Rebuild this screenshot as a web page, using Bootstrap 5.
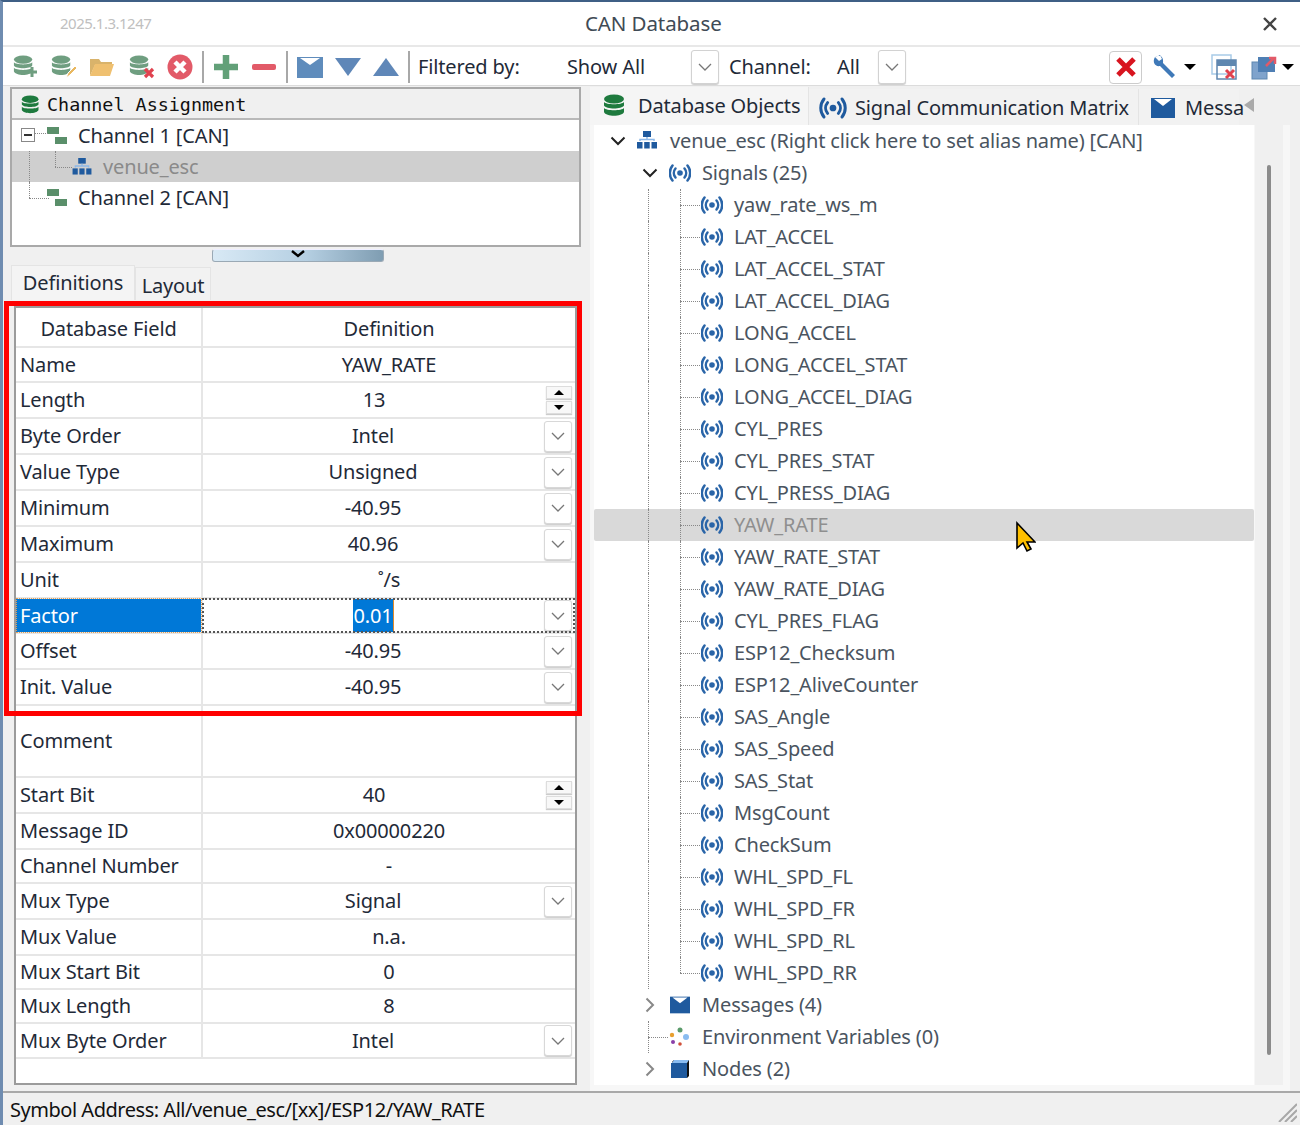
<!DOCTYPE html>
<html lang="en">
<head>
<meta charset="utf-8">
<title>CAN Database</title>
<link href="https://cdn.jsdelivr.net/npm/bootstrap@5.3.0/dist/css/bootstrap.min.css" rel="stylesheet">
<script src="https://cdn.jsdelivr.net/npm/bootstrap@5.3.0/dist/js/bootstrap.bundle.min.js"></script>
<style>
html,body{margin:0;height:1125px;overflow:hidden;background:#fff}
body{font-family:"Noto Sans","Open Sans",sans-serif;font-size:20px;letter-spacing:-.14px;color:#1f2a38;line-height:1}
.app-win{width:1300px;height:1125px;border-top:2px solid #3f5f85;border-left:3px solid #6f8cb0;position:relative;background:#f0f0f0}
.ttl-bar{height:45px;background:#fff;border-bottom:2px solid #e8e8e8;position:relative}
.ttl-ver{margin-left:57px;font-size:15px;color:#c0c0c0;width:530px;letter-spacing:-.5px}
.ttl-txt{font-size:20.5px;color:#404a55;width:600px;text-align:left;margin-left:-5px;letter-spacing:-.1px}
.ttl-x{margin-left:auto;margin-right:22px;width:16px;height:16px}
.tool-bar{height:39px;background:#fff;border-bottom:1px solid #dcdcdc;padding-top:2px}
.tool-left{gap:12px;padding-left:10px}
.tb-ic{width:26px;height:26px;flex:none}
.tb-db4{margin-left:2px}
.tb-sep{width:2px;height:32px;background:#a8a8a8;flex:none;margin:0 -3px}
.fl-lab{margin-left:11px;width:149px}
.sa-val{width:124px}
.ch-lab{margin-left:10px;width:108px}
.ch-val{width:41px}
.dd-box{width:28px;height:34px;border:1px solid #d2d2d2;border-radius:3px;background:#fff;box-shadow:0 1px 1px #ccc;display:flex;align-items:center;justify-content:center;flex:none}
.dd-box svg{width:14px;height:8px}
.x-box{width:33px;height:33px;border:1px solid #ccc;border-radius:4px;display:flex;align-items:center;justify-content:center;margin-left:203px;flex:none}
.caret-d{width:0;height:0;border-left:6px solid transparent;border-right:6px solid transparent;border-top:6px solid #000;flex:none}
.ml-w{margin-left:10px}.ml-c{margin-left:6px}.ml-p{margin-left:15px}.ml-q{margin-left:14px}.ml-r{margin-left:5px}
.main-area{height:1005px;padding-top:1px}
.left-col{width:571px;margin-left:7px;flex:none}
.chan-panel{height:160px;border:2px solid #a9a9a9;background:#fff}
.chan-head{height:31px;background:#f0f0f0;border-bottom:2px solid #b9b9b9;font-family:"DejaVu Sans Mono",monospace;font-size:18.4px;letter-spacing:0;color:#111;padding:3px 0 0 9px;gap:6px}
.chan-head svg{flex:none}
.chan-row{height:31px;padding-left:3px}
.chan-sel{background:#cfcfcf;color:#8a8a8a}
.chan-txt{margin-left:11px}
.tg{width:32px;height:100%;position:relative;flex:none}
.tg-n{width:25px}
.tg-v::before,.tg-t::before,.tg-l::before{content:"";position:absolute;left:calc(50% - 2px);top:0;bottom:0;border-left:1px dotted #888}
.tg-l::before{bottom:50%}
.tg-t::after,.tg-l::after{content:"";position:absolute;left:calc(50% - 2px);right:-2px;top:50%;border-top:1px dotted #888}
.tg-n.tg-l::before{left:8px}
.tg-n.tg-l::after{left:8px;right:0}
.chan-ic{width:20px;height:17px;flex:none}
.exp-box{width:14px;height:14px;border:1px solid #888;background:#fff;position:absolute;left:6px;top:8px}
.exp-box::after{content:"";position:absolute;left:2px;right:2px;top:5px;height:2px;background:#333}
.exp-dash{position:absolute;left:20px;right:-1px;top:13px;border-top:1px dotted #888}
.split-hd{width:172px;height:13px;margin:2px 0 3px 202px;border:1px solid #9aa9b5;border-radius:3px;background:linear-gradient(90deg,#d8e9f5,#b5cfe2 55%,#7f9db2);border-top-color:#eef;position:relative;display:flex;justify-content:center}
.split-hd svg{width:14px;height:8px}
.ltabs{height:35px;padding-left:1px}
.ltab{background:#f2f2f2;border:1px solid #e4e4e4;border-bottom:0;display:flex;align-items:center;justify-content:center}
.ltab-on{width:124px;height:35px;background:#f4f4f4}
.ltab-off{width:76px;height:33px;padding-top:4px}
.def-frame{margin:6px 0 0 4px;width:563px;height:779px;border:2px solid #9b9b9b;background:#fff}
.def-tbl{table-layout:fixed;width:559px;margin:0;border-collapse:collapse;--bs-table-bg:transparent;--bs-table-color:#1f2a38}
.def-tbl td,.def-tbl th{padding:0 0 0 4px;border:0;border-bottom:2px solid #e6e6e6;vertical-align:middle;font-weight:400;background:transparent;box-shadow:none}
.def-tbl td+td,.def-tbl th+th{padding:0;border-left:2px solid #e6e6e6;text-align:center}
.def-tbl th{padding-top:4px!important}
.def-tbl th:first-child{padding:0;text-align:center}
.col-a{width:186px}
.r40{height:39px}.r34{height:34px}.r35{height:35px}.r36{height:36px}.r72{height:72px}
.val-w{display:flex;align-items:center;padding-right:3px;height:100%}
.val-t{flex:1;text-align:center;padding-right:1px}
.cb-btn{width:28px;height:31px;border:1px solid #d8d8d8;border-radius:3px;background:#fff;box-shadow:0 1px 1px #ccc;display:flex;align-items:center;justify-content:center;flex:none}
.cb-btn svg{width:14px;height:8px}
.spin-w{width:26px;flex:none;display:flex;flex-direction:column;gap:2px}
.spin-b{height:13px;border:1px solid #ddd;background:#f8f8f8;display:flex;align-items:center;justify-content:center;box-shadow:0 1px 1px #ccc}
.spin-up{width:0;height:0;border-left:5px solid transparent;border-right:5px solid transparent;border-bottom:5px solid #000}
.spin-dn{width:0;height:0;border-left:5px solid transparent;border-right:5px solid transparent;border-top:5px solid #000}
.def-tbl td.fct-l{background:#0078d7;color:#fff;outline:1px dotted #e8a050;outline-offset:-1px}
.def-tbl td.fct-v{outline:2px dotted #555;outline-offset:-2px}
.sel-txt{background:#0078d7;color:#fff;padding:3px 0;box-shadow:1px 0 0 #e08a2a}
.right-col{width:700px;margin-left:9px;flex:none}
.rtabs{height:38px;overflow:hidden}
.rtab{height:38px;display:flex;align-items:center;flex:none;background:#f2f2f2;border-bottom:1px solid #e4e4e4;border-right:1px solid #e4e4e4}
.rtab svg{flex:none}
.rtab-a{width:219px;padding-left:13px;gap:11px;background:#f5f5f5;border-bottom:0}
.rtab-b{width:330px;padding-left:9px;gap:7px;margin-top:2px}
.rtab-c{width:100px;padding-left:11px;gap:9px;margin-top:2px;white-space:nowrap;border:0}
.rtab-arr{width:0;height:0;border-top:7px solid transparent;border-bottom:7px solid transparent;border-right:10px solid #aaa;margin:11px 0 0 5px;flex:none}
.tree-wrap{height:966px;background:#f7f7f7;padding:0 7px 6px 4px}
.tree-box{width:660px;height:960px;background:#fff}
.tree-row{height:32px;padding-left:8px;color:#4a5460;white-space:nowrap}
.tree-sel{background:#d9d9d9;color:#8f8f8f;border-radius:2px}
.tc{width:32px;height:32px;flex:none;display:flex;align-items:center;justify-content:center;position:relative}
.tc svg.chev{width:16px;height:10px}
.tc svg.chev-r{width:10px;height:16px}
.ico-s{width:22px;height:20px;margin-left:3px;margin-right:11px;flex:none}
.ico-b{color:#2a65a8}
.scr-tr{width:28px;height:960px;background:#f0f0f0;margin-left:1px;flex:none;padding:40px 0 0 12px}
.scr-th{width:4px;height:890px;background:#8b8b8b;border-radius:2px}
.stat-bar{height:33px;border-top:2px solid #a9a9a9;background:#f0f0f0;padding:2px 0 0 7px;position:relative;color:#111;letter-spacing:-.47px}
.grip-s{position:absolute;right:3px;bottom:2px;width:20px;height:20px}
.red-box{position:absolute;left:1px;top:299px;width:578px;height:415px;border:5px solid #f00;pointer-events:none}
.cur-ic{position:absolute;left:1009px;top:518px;width:24px;height:34px}
</style>
</head>
<body>
<svg width="0" height="0" class="d-none">
<defs>
<symbol id="i-db" viewBox="0 0 24 24"><ellipse cx="11" cy="5" rx="10" ry="4.5" fill="currentColor"/><path d="M1 8c2 3 18 3 20 0v3.5c-2 4-18 4-20 0zM1 14c2 3 18 3 20 0v4c-2 5-18 5-20 0z" fill="currentColor"/></symbol>
<symbol id="i-sig" viewBox="0 0 22 20"><circle cx="11" cy="10" r="2.800" fill="currentColor"/><g fill="none" stroke="currentColor" stroke-width="2.500" stroke-linecap="round"><path d="M6.500 5.500c-2.200 2.600-2.200 6.400 0 9M15.500 5.500c2.200 2.600 2.200 6.400 0 9"/><path d="M3.500 2.500c-3.600 4.500-3.600 10.500 0 15M18.500 2.500c3.600 4.500 3.600 10.500 0 15"/></g></symbol>
<symbol id="i-msg" viewBox="0 0 26 24"><rect x="1" y="2" width="24" height="20" fill="#1f5a9e"/><path d="M4 3h18l-9 7z" fill="#fff"/></symbol>
<symbol id="i-net" viewBox="0 0 20 18"><rect x="6" y="0" width="8" height="6" fill="#1f5a9e"/><path d="M10 6v3M3 10V8.500h14V10" stroke="#8db8e8" stroke-width="1.500" fill="none"/><rect x="0" y="11" width="5.500" height="6.500" fill="#1f5a9e"/><rect x="7.200" y="11" width="5.500" height="6.500" fill="#1f5a9e"/><rect x="14.500" y="11" width="5.500" height="6.500" fill="#1f5a9e"/></symbol>
<symbol id="i-chan" viewBox="0 0 20 17"><rect x="0" y="0" width="12" height="7" fill="#5a8f6a"/><rect x="8" y="10" width="12" height="7" fill="#5a8f6a"/></symbol>
<symbol id="i-chev" viewBox="0 0 14 8"><path d="M1 1l6 6 6-6" fill="none" stroke="#777" stroke-width="1.300"/></symbol>
<symbol id="i-chevb" viewBox="0 0 16 10"><path d="M1.500 1.500L8 8l6.500-6.500" fill="none" stroke="#222" stroke-width="2"/></symbol>
<symbol id="i-chevr" viewBox="0 0 10 16"><path d="M1.500 1.500L8 8l-6.500 6.500" fill="none" stroke="#888" stroke-width="2"/></symbol>
</defs>
</svg>
<div class="app-win">
  <div class="ttl-bar d-flex align-items-center">
    <div class="ttl-ver">2025.1.3.1247</div>
    <div class="ttl-txt">CAN Database</div>
    <svg class="ttl-x" viewBox="0 0 16 16"><path d="M2 2l12 12M14 2L2 14" stroke="#444" stroke-width="2.400"/></svg>
  </div>
  <div class="tool-bar d-flex align-items-center">
    <div class="d-flex align-items-center tool-left">
      <svg class="tb-ic" viewBox="0 0 26 26" color="#6f9e80"><use href="#i-db" width="22" height="24"/><path d="M19 13v10M14 18h10" stroke="#6f9e80" stroke-width="3"/></svg>
      <svg class="tb-ic" viewBox="0 0 26 26" color="#6f9e80"><use href="#i-db" width="22" height="24"/><path d="M15 24l2-5 7-7 2 2-7 7z" fill="#e9b860" stroke="#fff"/></svg>
      <svg class="tb-ic" viewBox="0 0 26 26"><path d="M1 5h9l2 3h11v3H6L1 22z" fill="#d9b36b"/><path d="M6 10h19l-4 12H1z" fill="#efc070"/></svg>
      <svg class="tb-ic tb-db4" viewBox="0 0 26 26" color="#6f9e80"><use href="#i-db" width="22" height="24"/><path d="M16 15l8 8M24 15l-8 8" stroke="#e0424f" stroke-width="3.200"/></svg>
      <svg class="tb-ic" viewBox="0 0 26 26"><circle cx="13" cy="13" r="12.500" fill="#e25a68"/><path d="M8 8l10 10M18 8L8 18" stroke="#fff" stroke-width="4.500"/></svg>
      <div class="tb-sep"></div>
      <svg class="tb-ic" viewBox="0 0 26 26"><path d="M13 1v24M1 13h24" stroke="#62a078" stroke-width="6.500"/></svg>
      <svg class="tb-ic" viewBox="0 0 26 26"><rect x="1" y="10" width="24" height="6" rx="2" fill="#e25a68"/></svg>
      <div class="tb-sep"></div>
      <svg class="tb-ic" viewBox="0 0 26 24"><rect x="0" y="2" width="26" height="21" fill="#5f8cbc"/><path d="M3 3h20l-10 7z" fill="#fff"/></svg>
      <svg class="tb-ic" viewBox="0 0 26 26"><path d="M0 4h26L13 22z" fill="#5f87b8"/></svg>
      <svg class="tb-ic" viewBox="0 0 26 26"><path d="M0 22h26L13 4z" fill="#5f87b8"/></svg>
      <div class="tb-sep"></div>
    </div>
    <span class="fl-lab">Filtered by:</span>
    <span class="sa-val">Show All</span>
    <div class="dd-box"><svg><use href="#i-chev"/></svg></div>
    <span class="ch-lab">Channel:</span>
    <span class="ch-val">All</span>
    <div class="dd-box"><svg><use href="#i-chev"/></svg></div>
    <div class="x-box"><svg width="22" height="22" viewBox="0 0 22 22"><path d="M3 3l16 16M19 3L3 19" stroke="#d8141f" stroke-width="5"/></svg></div>
    <svg class="tb-ic ml-w" viewBox="0 0 26 26"><path d="M3 3c5-3 9 0 8 6l12 12-3 3L8 12C3 13 0 8 3 3l4 4 3-2-2-4z" fill="#3f79b8"/></svg>
    <div class="caret-d ml-c"></div>
    <svg class="tb-ic ml-p" viewBox="0 0 26 26"><rect x="1" y="1" width="19" height="19" fill="none" stroke="#a9cbe8" stroke-width="1.500"/><rect x="6" y="6" width="19" height="6" fill="#5f87b0"/><rect x="6" y="6" width="19" height="19" fill="#fff" fill-opacity="0" stroke="#5f87b0" stroke-width="1.500"/><path d="M15 16l8 8M23 16l-8 8" stroke="#e0424f" stroke-width="3"/></svg>
    <svg class="tb-ic ml-q" viewBox="0 0 26 26"><rect x="1" y="8" width="15" height="17" fill="#7fa3cc" stroke="#5f87b0"/><rect x="7" y="3" width="17" height="15" fill="#4f7fb4"/><path d="M15 12l8-8M18 4h6v6" stroke="#e25a68" stroke-width="2.500" fill="none"/></svg>
    <div class="caret-d ml-r"></div>
  </div>
  <div class="main-area d-flex">
    <div class="left-col">
      <div class="chan-panel">
        <div class="chan-head d-flex align-items-center">
          <svg width="20" height="20" color="#1e7a3e"><use href="#i-db"/></svg>Channel Assignment
        </div>
        <div class="chan-row d-flex align-items-center">
          <div class="tg"><span class="exp-box"></span><span class="exp-dash"></span></div>
          <svg class="chan-ic"><use href="#i-chan"/></svg><span class="chan-txt">Channel 1 [CAN]</span>
        </div>
        <div class="chan-row chan-sel d-flex align-items-center">
          <div class="tg tg-v"></div><div class="tg tg-n tg-l"></div>
          <svg class="chan-ic"><use href="#i-net"/></svg><span class="chan-txt">venue_esc</span>
        </div>
        <div class="chan-row d-flex align-items-center">
          <div class="tg tg-l"></div>
          <svg class="chan-ic"><use href="#i-chan"/></svg><span class="chan-txt">Channel 2 [CAN]</span>
        </div>
      </div>
      <div class="split-hd"><svg><path d="M1 1l6 5 6-5" fill="none" stroke="#000" stroke-width="2.400"/></svg></div>
      <div class="ltabs d-flex align-items-end">
        <div class="ltab ltab-on">Definitions</div>
        <div class="ltab ltab-off">Layout</div>
      </div>
      <div class="def-frame">
        <table class="table def-tbl">
          <colgroup><col class="col-a"><col></colgroup>
          <tr class="r40"><th>Database Field</th><th>Definition</th></tr>
          <tr class="r35"><td>Name</td><td>YAW_RATE</td></tr>
          <tr class="r36"><td>Length</td><td><div class="val-w"><span class="val-t">13</span><div class="spin-w"><div class="spin-b"><span class="spin-up"></span></div><div class="spin-b"><span class="spin-dn"></span></div></div></div></td></tr>
          <tr class="r36"><td>Byte Order</td><td><div class="val-w"><span class="val-t">Intel</span><div class="cb-btn"><svg><use href="#i-chev"/></svg></div></div></td></tr>
          <tr class="r36"><td>Value Type</td><td><div class="val-w"><span class="val-t">Unsigned</span><div class="cb-btn"><svg><use href="#i-chev"/></svg></div></div></td></tr>
          <tr class="r36"><td>Minimum</td><td><div class="val-w"><span class="val-t">-40.95</span><div class="cb-btn"><svg><use href="#i-chev"/></svg></div></div></td></tr>
          <tr class="r36"><td>Maximum</td><td><div class="val-w"><span class="val-t">40.96</span><div class="cb-btn"><svg><use href="#i-chev"/></svg></div></div></td></tr>
          <tr class="r36"><td>Unit</td><td>˚/s</td></tr>
          <tr class="r35"><td class="fct-l">Factor</td><td class="fct-v"><div class="val-w"><span class="val-t"><span class="sel-txt">0.01</span></span><div class="cb-btn"><svg><use href="#i-chev"/></svg></div></div></td></tr>
          <tr class="r36"><td>Offset</td><td><div class="val-w"><span class="val-t">-40.95</span><div class="cb-btn"><svg><use href="#i-chev"/></svg></div></div></td></tr>
          <tr class="r36"><td>Init. Value</td><td><div class="val-w"><span class="val-t">-40.95</span><div class="cb-btn"><svg><use href="#i-chev"/></svg></div></div></td></tr>
          <tr class="r72"><td>Comment</td><td></td></tr>
          <tr class="r36"><td>Start Bit</td><td><div class="val-w"><span class="val-t">40</span><div class="spin-w"><div class="spin-b"><span class="spin-up"></span></div><div class="spin-b"><span class="spin-dn"></span></div></div></div></td></tr>
          <tr class="r36"><td>Message ID</td><td>0x00000220</td></tr>
          <tr class="r34"><td>Channel Number</td><td>-</td></tr>
          <tr class="r36"><td>Mux Type</td><td><div class="val-w"><span class="val-t">Signal</span><div class="cb-btn"><svg><use href="#i-chev"/></svg></div></div></td></tr>
          <tr class="r36"><td>Mux Value</td><td>n.a.</td></tr>
          <tr class="r34"><td>Mux Start Bit</td><td>0</td></tr>
          <tr class="r34"><td>Mux Length</td><td>8</td></tr>
          <tr class="r35"><td>Mux Byte Order</td><td><div class="val-w"><span class="val-t">Intel</span><div class="cb-btn"><svg><use href="#i-chev"/></svg></div></div></td></tr>
        </table>
      </div>
    </div>
    <div class="right-col">
      <div class="rtabs d-flex">
        <div class="rtab rtab-a"><svg width="24" height="26" color="#1e7a3e"><use href="#i-db"/></svg>Database Objects</div>
        <div class="rtab rtab-b"><svg width="30" height="24" color="#1f5a9e"><use href="#i-sig"/></svg>Signal Communication Matrix</div>
        <div class="rtab rtab-c"><svg width="26" height="24"><use href="#i-msg"/></svg>Messa</div>
        <div class="rtab-arr"></div>
      </div>
      <div class="tree-wrap d-flex">
        <div class="tree-box">
          <div class="tree-row d-flex align-items-center"><div class="tc"><svg class="chev"><use href="#i-chevb"/></svg></div><svg class="ico-s"><use href="#i-net" width="20" height="18"/></svg>venue_esc (Right click here to set alias name) [CAN]</div>
          <div class="tree-row d-flex align-items-center"><div class="tc"></div><div class="tc"><svg class="chev"><use href="#i-chevb"/></svg></div><svg class="ico-s ico-b"><use href="#i-sig"/></svg>Signals (25)</div>
          <div class="tree-row d-flex align-items-center"><div class="tc"></div><div class="tc tg-v"></div><div class="tc tg-t"></div><svg class="ico-s ico-b"><use href="#i-sig"/></svg>yaw_rate_ws_m</div>
          <div class="tree-row d-flex align-items-center"><div class="tc"></div><div class="tc tg-v"></div><div class="tc tg-t"></div><svg class="ico-s ico-b"><use href="#i-sig"/></svg>LAT_ACCEL</div>
          <div class="tree-row d-flex align-items-center"><div class="tc"></div><div class="tc tg-v"></div><div class="tc tg-t"></div><svg class="ico-s ico-b"><use href="#i-sig"/></svg>LAT_ACCEL_STAT</div>
          <div class="tree-row d-flex align-items-center"><div class="tc"></div><div class="tc tg-v"></div><div class="tc tg-t"></div><svg class="ico-s ico-b"><use href="#i-sig"/></svg>LAT_ACCEL_DIAG</div>
          <div class="tree-row d-flex align-items-center"><div class="tc"></div><div class="tc tg-v"></div><div class="tc tg-t"></div><svg class="ico-s ico-b"><use href="#i-sig"/></svg>LONG_ACCEL</div>
          <div class="tree-row d-flex align-items-center"><div class="tc"></div><div class="tc tg-v"></div><div class="tc tg-t"></div><svg class="ico-s ico-b"><use href="#i-sig"/></svg>LONG_ACCEL_STAT</div>
          <div class="tree-row d-flex align-items-center"><div class="tc"></div><div class="tc tg-v"></div><div class="tc tg-t"></div><svg class="ico-s ico-b"><use href="#i-sig"/></svg>LONG_ACCEL_DIAG</div>
          <div class="tree-row d-flex align-items-center"><div class="tc"></div><div class="tc tg-v"></div><div class="tc tg-t"></div><svg class="ico-s ico-b"><use href="#i-sig"/></svg>CYL_PRES</div>
          <div class="tree-row d-flex align-items-center"><div class="tc"></div><div class="tc tg-v"></div><div class="tc tg-t"></div><svg class="ico-s ico-b"><use href="#i-sig"/></svg>CYL_PRES_STAT</div>
          <div class="tree-row d-flex align-items-center"><div class="tc"></div><div class="tc tg-v"></div><div class="tc tg-t"></div><svg class="ico-s ico-b"><use href="#i-sig"/></svg>CYL_PRESS_DIAG</div>
          <div class="tree-row tree-sel d-flex align-items-center"><div class="tc"></div><div class="tc tg-v"></div><div class="tc tg-t"></div><svg class="ico-s ico-b"><use href="#i-sig"/></svg>YAW_RATE</div>
          <div class="tree-row d-flex align-items-center"><div class="tc"></div><div class="tc tg-v"></div><div class="tc tg-t"></div><svg class="ico-s ico-b"><use href="#i-sig"/></svg>YAW_RATE_STAT</div>
          <div class="tree-row d-flex align-items-center"><div class="tc"></div><div class="tc tg-v"></div><div class="tc tg-t"></div><svg class="ico-s ico-b"><use href="#i-sig"/></svg>YAW_RATE_DIAG</div>
          <div class="tree-row d-flex align-items-center"><div class="tc"></div><div class="tc tg-v"></div><div class="tc tg-t"></div><svg class="ico-s ico-b"><use href="#i-sig"/></svg>CYL_PRES_FLAG</div>
          <div class="tree-row d-flex align-items-center"><div class="tc"></div><div class="tc tg-v"></div><div class="tc tg-t"></div><svg class="ico-s ico-b"><use href="#i-sig"/></svg>ESP12_Checksum</div>
          <div class="tree-row d-flex align-items-center"><div class="tc"></div><div class="tc tg-v"></div><div class="tc tg-t"></div><svg class="ico-s ico-b"><use href="#i-sig"/></svg>ESP12_AliveCounter</div>
          <div class="tree-row d-flex align-items-center"><div class="tc"></div><div class="tc tg-v"></div><div class="tc tg-t"></div><svg class="ico-s ico-b"><use href="#i-sig"/></svg>SAS_Angle</div>
          <div class="tree-row d-flex align-items-center"><div class="tc"></div><div class="tc tg-v"></div><div class="tc tg-t"></div><svg class="ico-s ico-b"><use href="#i-sig"/></svg>SAS_Speed</div>
          <div class="tree-row d-flex align-items-center"><div class="tc"></div><div class="tc tg-v"></div><div class="tc tg-t"></div><svg class="ico-s ico-b"><use href="#i-sig"/></svg>SAS_Stat</div>
          <div class="tree-row d-flex align-items-center"><div class="tc"></div><div class="tc tg-v"></div><div class="tc tg-t"></div><svg class="ico-s ico-b"><use href="#i-sig"/></svg>MsgCount</div>
          <div class="tree-row d-flex align-items-center"><div class="tc"></div><div class="tc tg-v"></div><div class="tc tg-t"></div><svg class="ico-s ico-b"><use href="#i-sig"/></svg>CheckSum</div>
          <div class="tree-row d-flex align-items-center"><div class="tc"></div><div class="tc tg-v"></div><div class="tc tg-t"></div><svg class="ico-s ico-b"><use href="#i-sig"/></svg>WHL_SPD_FL</div>
          <div class="tree-row d-flex align-items-center"><div class="tc"></div><div class="tc tg-v"></div><div class="tc tg-t"></div><svg class="ico-s ico-b"><use href="#i-sig"/></svg>WHL_SPD_FR</div>
          <div class="tree-row d-flex align-items-center"><div class="tc"></div><div class="tc tg-v"></div><div class="tc tg-t"></div><svg class="ico-s ico-b"><use href="#i-sig"/></svg>WHL_SPD_RL</div>
          <div class="tree-row d-flex align-items-center"><div class="tc"></div><div class="tc tg-v"></div><div class="tc tg-l"></div><svg class="ico-s ico-b"><use href="#i-sig"/></svg>WHL_SPD_RR</div>
          <div class="tree-row d-flex align-items-center"><div class="tc"></div><div class="tc"><svg class="chev-r"><use href="#i-chevr"/></svg></div><svg class="ico-s"><use href="#i-msg" width="22" height="20"/></svg>Messages (4)</div>
          <div class="tree-row d-flex align-items-center"><div class="tc"></div><div class="tc tg-t"></div><svg class="ico-s" viewBox="0 0 22 20"><circle cx="11" cy="3" r="2.500" fill="#5a9a6a"/><circle cx="3" cy="8" r="2.200" fill="#e8a030"/><circle cx="17" cy="10" r="3" fill="#8abcf0"/><circle cx="4" cy="15" r="2" fill="#8a3fa8"/><circle cx="11" cy="17" r="1.800" fill="#d0503a"/></svg>Environment Variables (0)</div>
          <div class="tree-row d-flex align-items-center"><div class="tc"></div><div class="tc"><svg class="chev-r"><use href="#i-chevr"/></svg></div><svg class="ico-s" viewBox="0 0 22 20"><path d="M3 3l2-2h15v16l-2 2z" fill="#111"/><path d="M3 4l2-3h15l-2 3z" fill="#8abcf0"/><rect x="2" y="4" width="16" height="15" fill="#1f5a9e"/></svg>Nodes (2)</div>
        </div>
        <div class="scr-tr"><div class="scr-th"></div></div>
      </div>
    </div>
  </div>
  <div class="stat-bar d-flex align-items-center">Symbol Address: All/venue_esc/[xx]/ESP12/YAW_RATE
    <svg class="grip-s" viewBox="0 0 20 20"><path d="M2 20L20 2M8 20L20 8M14 20l6-6" stroke="#a8a8a8" stroke-width="2"/></svg>
  </div>
  <div class="red-box"></div>
  <svg class="cur-ic" viewBox="0 0 24 34"><path d="M5 3v25l6-5 4 8 4-2-4-7h8z" fill="#ffc000" stroke="#000" stroke-width="1.600"/></svg>
</div>
</body>
</html>
